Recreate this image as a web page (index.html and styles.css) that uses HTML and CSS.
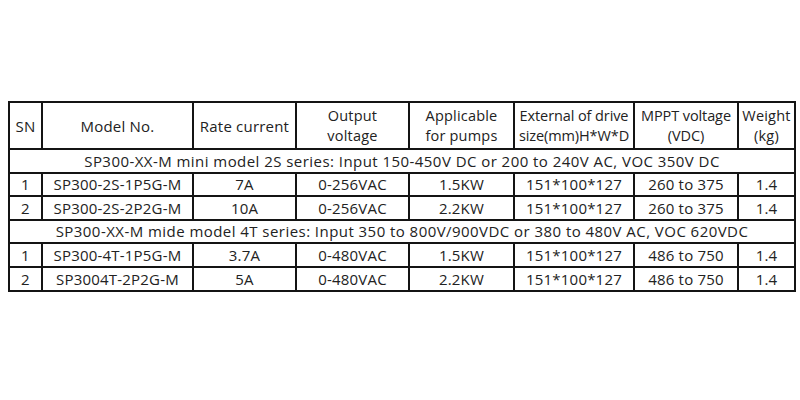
FILE: index.html
```html
<!DOCTYPE html>
<html>
<head>
<meta charset="utf-8">
<link rel="stylesheet" href="styles.css">
</head>
<body>
<div class="page">
<table class="spec">
  <colgroup>
    <col class="c-sn"><col class="c-model"><col class="c-rate"><col class="c-out">
    <col class="c-app"><col class="c-ext"><col class="c-mppt"><col class="c-wt">
  </colgroup>
  <thead>
    <tr class="head">
      <th>SN</th>
      <th>Model No.</th>
      <th>Rate current</th>
      <th><span class="ln">Output</span><span class="ln">voltage</span></th>
      <th><span class="ln">Applicable</span><span class="ln">for pumps</span></th>
      <th class="tight"><span class="ln">External of drive</span><span class="ln">size(mm)H*W*D</span></th>
      <th class="tight"><span class="ln">MPPT voltage</span><span class="ln">(VDC)</span></th>
      <th><span class="ln">Weight</span><span class="ln">(kg)</span></th>
    </tr>
  </thead>
  <tbody>
    <tr class="section"><td colspan="8">SP300-XX-M mini model 2S series: Input 150-450V DC or 200 to 240V AC, VOC 350V DC</td></tr>
    <tr class="row"><td>1</td><td>SP300-2S-1P5G-M</td><td>7A</td><td>0-256VAC</td><td>1.5KW</td><td>151*100*127</td><td>260 to 375</td><td>1.4</td></tr>
    <tr class="row"><td>2</td><td>SP300-2S-2P2G-M</td><td>10A</td><td>0-256VAC</td><td>2.2KW</td><td>151*100*127</td><td>260 to 375</td><td>1.4</td></tr>
    <tr class="section"><td colspan="8">SP300-XX-M mide model 4T series: Input 350 to 800V/900VDC or 380 to 480V AC, VOC 620VDC</td></tr>
    <tr class="row"><td>1</td><td>SP300-4T-1P5G-M</td><td>3.7A</td><td>0-480VAC</td><td>1.5KW</td><td>151*100*127</td><td>486 to 750</td><td>1.4</td></tr>
    <tr class="row last"><td>2</td><td>SP3004T-2P2G-M</td><td>5A</td><td>0-480VAC</td><td>2.2KW</td><td>151*100*127</td><td>486 to 750</td><td>1.4</td></tr>
  </tbody>
</table>
</div>
</body>
</html>
```

FILE: styles.css
```css
html, body {
  margin: 0;
  padding: 0;
  background: #ffffff;
}

.page {
  padding: 101px 0 0 8px;
}

.spec {
  border-collapse: collapse;
  table-layout: fixed;
  width: 786px;
  font-family: "Open Sans", sans-serif;
  font-size: 15px;
  letter-spacing: 0.2px;
  color: #222222;
}

.c-sn { width: 33px; }
.c-model { width: 151px; }
.c-rate { width: 103px; }
.c-out { width: 113px; }
.c-app { width: 105px; }
.c-ext { width: 120px; }
.c-mppt { width: 104px; }
.c-wt { width: 57px; }

.spec th,
.spec td {
  border: 2px solid #141414;
  padding: 0;
  text-align: center;
  vertical-align: middle;
  white-space: nowrap;
  font-weight: normal;
  overflow: hidden;
}

.head th {
  height: 45px;
  line-height: 20px;
}

.ln {
  display: block;
  font-size: 14.5px;
  line-height: 20px;
}

.head th.tight {
  letter-spacing: -0.1px;
}

.section td {
  height: 21.5px;
  line-height: 20px;
  letter-spacing: 0.45px;
}

.row td {
  height: 21.5px;
  line-height: 20px;
}

.row.last td {
  height: 22.5px;
}
```
